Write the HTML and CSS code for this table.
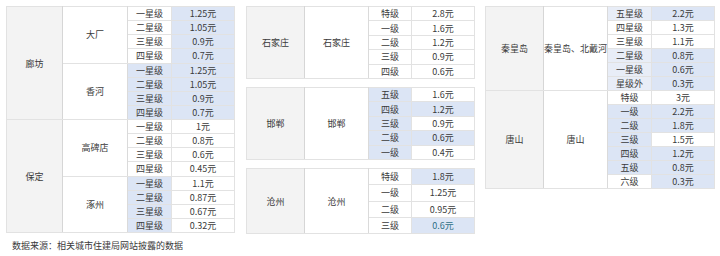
FILE: index.html
```html
<!DOCTYPE html>
<html lang="zh-CN">
<head>
<meta charset="utf-8">
<title>停车收费标准</title>
<link rel="stylesheet" href="styles.css">
</head>
<body>
<div class="wrap">
  <div class="col">
    <table class="t t-left">
      <colgroup><col class="c1"><col class="c2"><col class="c3"><col class="c4"></colgroup>
      <tr><td class="prov" rowspan="8">廊坊</td><td class="city" rowspan="4">大厂</td><td>一星级</td><td class="b">1.25元</td></tr>
      <tr><td>二星级</td><td class="b">1.05元</td></tr>
      <tr><td>三星级</td><td class="b">0.9元</td></tr>
      <tr><td>四星级</td><td class="b">0.7元</td></tr>
      <tr><td class="city" rowspan="4">香河</td><td class="b">一星级</td><td class="b">1.25元</td></tr>
      <tr><td class="b">二星级</td><td class="b">1.05元</td></tr>
      <tr><td class="b">三星级</td><td class="b">0.9元</td></tr>
      <tr><td class="b">四星级</td><td class="b">0.7元</td></tr>
      <tr><td class="prov" rowspan="8">保定</td><td class="city" rowspan="4">高碑店</td><td>一星级</td><td>1元</td></tr>
      <tr><td>二星级</td><td>0.8元</td></tr>
      <tr><td>三星级</td><td>0.6元</td></tr>
      <tr><td>四星级</td><td>0.45元</td></tr>
      <tr><td class="city" rowspan="4">涿州</td><td class="b">一星级</td><td>1.1元</td></tr>
      <tr><td class="b">二星级</td><td>0.87元</td></tr>
      <tr><td class="b">三星级</td><td>0.67元</td></tr>
      <tr><td class="b">四星级</td><td>0.32元</td></tr>
    </table>
  </div>
  <div class="col mid">
    <table class="t t-sjz">
      <colgroup><col class="c1"><col class="c2"><col class="c3"><col class="c4"></colgroup>
      <tr><td class="prov" rowspan="5">石家庄</td><td class="city" rowspan="5">石家庄</td><td>特级</td><td>2.8元</td></tr>
      <tr><td>一级</td><td>1.6元</td></tr>
      <tr><td>二级</td><td>1.2元</td></tr>
      <tr><td>三级</td><td>0.9元</td></tr>
      <tr><td>四级</td><td>0.6元</td></tr>
    </table>
    <table class="t t-hd">
      <colgroup><col class="c1"><col class="c2"><col class="c3"><col class="c4"></colgroup>
      <tr><td class="prov" rowspan="5">邯郸</td><td class="city" rowspan="5">邯郸</td><td class="b">五级</td><td>1.6元</td></tr>
      <tr><td class="b">四级</td><td class="b">1.2元</td></tr>
      <tr><td class="b">三级</td><td>0.9元</td></tr>
      <tr><td class="b">二级</td><td class="b">0.6元</td></tr>
      <tr><td class="b">一级</td><td>0.4元</td></tr>
    </table>
    <table class="t t-cz">
      <colgroup><col class="c1"><col class="c2"><col class="c3"><col class="c4"></colgroup>
      <tr><td class="prov" rowspan="4">沧州</td><td class="city" rowspan="4">沧州</td><td>特级</td><td class="b">1.8元</td></tr>
      <tr><td>一级</td><td>1.25元</td></tr>
      <tr><td>二级</td><td>0.95元</td></tr>
      <tr><td>三级</td><td class="b teal">0.6元</td></tr>
    </table>
  </div>
  <div class="col">
    <table class="t t-right">
      <colgroup><col class="c1"><col class="c2"><col class="c3"><col class="c4"></colgroup>
      <tr><td class="prov" rowspan="6">秦皇岛</td><td class="city" rowspan="6">秦皇岛、北戴河</td><td class="lb">五星级</td><td class="b">2.2元</td></tr>
      <tr><td>四星级</td><td>1.3元</td></tr>
      <tr><td>三星级</td><td>1.1元</td></tr>
      <tr><td class="lb">二星级</td><td class="b">0.8元</td></tr>
      <tr><td class="lb">一星级</td><td class="b">0.6元</td></tr>
      <tr><td class="lb">星级外</td><td class="b">0.3元</td></tr>
      <tr><td class="prov" rowspan="7">唐山</td><td class="city" rowspan="7">唐山</td><td>特级</td><td>3元</td></tr>
      <tr><td class="b">一级</td><td class="b">2.2元</td></tr>
      <tr><td class="b">二级</td><td class="b">1.8元</td></tr>
      <tr><td class="b">三级</td><td>1.5元</td></tr>
      <tr><td class="b">四级</td><td class="b">1.2元</td></tr>
      <tr><td class="b">五级</td><td class="b">0.8元</td></tr>
      <tr><td>六级</td><td class="b">0.3元</td></tr>
    </table>
  </div>
</div>
<p class="source">数据来源：相关城市住建局网站披露的数据</p>
</body>
</html>
```

FILE: styles.css
```css
html, body {
  margin: 0;
  padding: 0;
  background: #ffffff;
}
body {
  padding: 6px 0 0 6px;
  font-family: "Noto Sans CJK SC", "Noto Sans", sans-serif;
  color: #3a3a3a;
}
.wrap {
  display: flex;
  align-items: flex-start;
  gap: 10px;
}
.col {
  display: flex;
  flex-direction: column;
}
.mid {
  gap: 8px;
  margin-left: 1px;
}
.t {
  border-collapse: collapse;
  table-layout: fixed;
  font-size: 9px;
  line-height: 1;
  border: 1px solid #dcdcdc;
}
.t td {
  border: 1px solid #e2e2e2;
  text-align: center;
  vertical-align: middle;
  padding: 0;
  background: #ffffff;
  overflow: hidden;
  white-space: nowrap;
}
.t td.prov {
  background: #f3f3f3;
  border-right: 1px solid #d6d6d6;
}
.t td.city {
  border-right: 1px solid #dadada;
}
.t td.b {
  background: #dce5f5;
}
.t td.lb {
  background: #e8edf7;
}
.t td.teal {
  color: #2f6f86;
}
.t-left { width: 228px; height: 227px; }
.t-left .c1 { width: 56px; }
.t-left .c2 { width: 65px; }
.t-left .c3 { width: 44px; }
.t-left .c4 { width: 63px; }

.t-sjz, .t-hd, .t-cz { width: 228px; }
.t-sjz { height: 73px; }
.t-hd { height: 73px; }
.t-cz { height: 66px; }
.mid .c1 { width: 58px; }
.mid .c2 { width: 64px; }
.mid .c3 { width: 43px; }
.mid .c4 { width: 63px; }

.t-right { width: 229px; height: 183px; }
.t-right .c1 { width: 58px; }
.t-right .c2 { width: 64px; }
.t-right .c3 { width: 44px; }
.t-right .c4 { width: 63px; }

.source {
  margin: 6px 0 0 6px;
  font-size: 9px;
  line-height: 12px;
  color: #3a3a3a;
}
```
